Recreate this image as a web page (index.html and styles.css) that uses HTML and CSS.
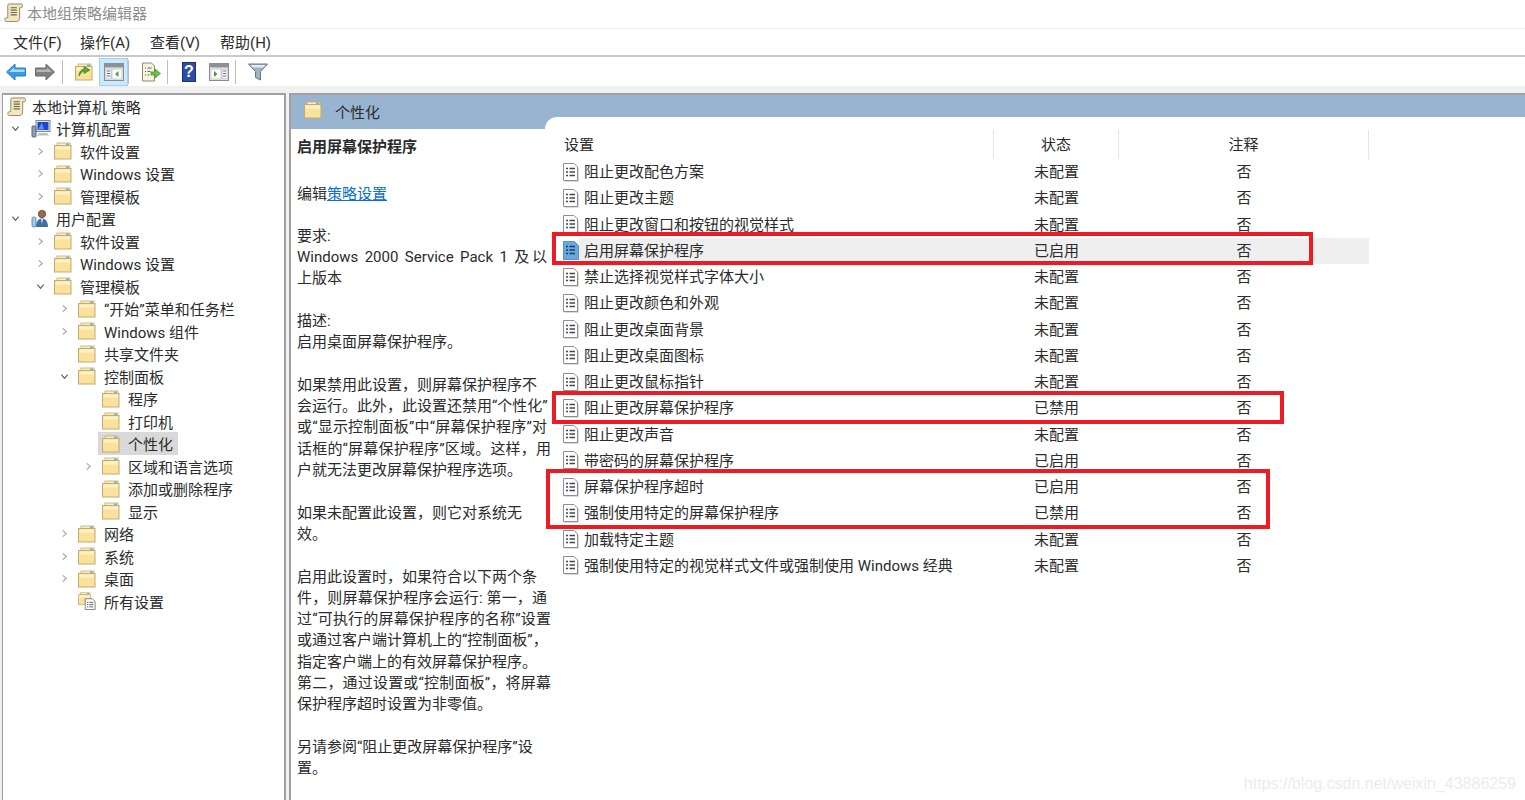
FILE: index.html
```html
<!DOCTYPE html>
<html lang="zh-CN">
<head>
    <meta charset="UTF-8">
    <title>本地组策略编辑器</title>
    <link rel="stylesheet" href="styles.css">
</head>
<body>
    <!-- shared icons -->
    <svg class="defs" width="0" height="0">
        <symbol id="scroll" viewBox="0 0 20 20">
            <path d="M5 1h13.500c1.200 0 1.200 3.500 0 4H16.500v10c0 2.500-1 4.500-3 4.500H2.500c-2 0-2.500-4 0-4H4V3c0-1 .5-2 1-2z" fill="#f3e8bd" stroke="#8f8566"/>
            <path d="M7 5h6.500M7 7.500h6.500M7 10h6.500M7 12.500h6.500" stroke="#6b6450" stroke-width="1.200"/>
        </symbol>
        <symbol id="folder" viewBox="0 0 18 18">
            <path d="M1.500 3.500h1.500v-1.500h12.500v14h-14z" fill="#c9b27a"/>
            <rect x="3" y="1" width="13" height="3" fill="#fbeebc" stroke="#c4ab70" stroke-width=".8"/>
            <rect x="12" y="1.500" width="3" height="1.500" fill="#6fb3dc"/>
            <rect x=".5" y="3.500" width="16.500" height="13.500" fill="#fae29c" stroke="#c4ab70"/>
            <rect x="1.500" y="4.500" width="14.500" height="3" fill="#fdf1c8"/>
        </symbol>
        <symbol id="folder-doc" viewBox="0 0 20 20">
            <use href="#folder" width="15" height="15"/>
            <path d="M8 7.500h8l3 3v9H8z" fill="#fff" stroke="#777"/>
            <path d="M10 11.500h1.500M12.500 11.500h4.500M10 14h1.500M12.500 14h4.500M10 16.500h1.500M12.500 16.500h4.500" stroke="#555"/>
        </symbol>
        <symbol id="computer" viewBox="0 0 20 20">
            <rect x="5" y="1.500" width="14" height="11" fill="#e3e8ee" stroke="#7d8791"/>
            <rect x="6.500" y="3" width="11" height="8" fill="#1c47c8"/>
            <path d="M7 10.500l4-7 2 7z" fill="#5d8ef0"/>
            <path d="M8 14h8l2 2.500H6z" fill="#b6bec7"/>
            <rect x="1" y="7" width="4" height="11" rx="1" fill="#8fa3b8" stroke="#566778"/>
        </symbol>
        <symbol id="user" viewBox="0 0 20 20">
            <circle cx="11" cy="5" r="3.700" fill="#9a6b4a" stroke="#5c4030" stroke-width=".7"/>
            <path d="M5 18c0-6 3-8.500 6-8.500s6 2.500 6 8.500z" fill="#3d6fa5"/>
            <path d="M10 10h2l-1 5z" fill="#e8eef5"/>
            <rect x="1" y="8" width="4" height="10" rx="1.500" fill="#a9c8e6" stroke="#4d7aa5" stroke-width=".8"/>
        </symbol>
        <symbol id="doc" viewBox="0 0 16 19">
            <path d="M1.500 1.500h10l4 4v13h-14z" fill="#b5b5b5"/>
            <path d="M.5.500h10.500l3.500 3.500v13.500H.5z" fill="#fff" stroke="#8e8e8e"/>
            <path d="M3 5.500h2M6.500 5.500h5.500M3 9h2M6.500 9h5.500M3 12.500h2M6.500 12.500h5.500" stroke="#3f4a56" stroke-width="1.500"/>
        </symbol>
        <symbol id="doc-on" viewBox="0 0 16 19">
            <path d="M.5.500h11l4 4v14H.5z" fill="#68a8dc" stroke="#5b93c4"/>
            <path d="M3 5.500h2M6.500 5.500h5.500M3 9h2M6.500 9h5.500M3 12.500h2M6.500 12.500h5.500" stroke="#173f70" stroke-width="1.500"/>
        </symbol>
        <symbol id="pane-win" viewBox="0 0 20 18">
            <rect x=".5" y=".5" width="19" height="17" fill="#f1f1f1" stroke="#8d8d8d"/>
            <rect x="1" y="1" width="18" height="3.500" fill="#8d9094"/>
            <rect x="2" y="6" width="5" height="10" fill="#fff" stroke="#a9a9a9" stroke-width=".6"/>
            <path d="M3 8h3M3 10.500h3M3 13h3" stroke="#4d78a8"/>
            <rect x="8" y="6" width="10" height="10" fill="#fff" stroke="#a9a9a9" stroke-width=".6"/>
        </symbol>
        <symbol id="chev-r" viewBox="0 0 8 10"><path d="M2 1.500L6 5 2 8.500" fill="none" stroke="#a6a6a6" stroke-width="1.300"/></symbol>
        <symbol id="chev-d" viewBox="0 0 10 8"><path d="M1.500 2L5 6 8.500 2" fill="none" stroke="#5c5c5c" stroke-width="1.300"/></symbol>
    </svg>

    <div class="titlebar">
        <svg class="ico-title"><use href="#scroll"/></svg>
        <span>本地组策略编辑器</span>
    </div>

    <div class="menubar">
        <span>文件(F)</span>
        <span>操作(A)</span>
        <span>查看(V)</span>
        <span>帮助(H)</span>
    </div>

    <div class="toolbar">
        <button class="tool tool-nav">
            <svg viewBox="0 0 20 18" width="20" height="18"><path d="M.5 9l8.500-8V5h10.500v8H9v4z" fill="#3a9ae8" stroke="#2a7cc4"/><path d="M3 9l5-4.500v2h10.500V9z" fill="#a9dcfb"/></svg>
        </button>
        <button class="tool tool-nav">
            <svg viewBox="0 0 20 18" width="20" height="18"><path d="M19.500 9L11 1V5H.5v8H11v4z" fill="#808080" stroke="#6a6a6a"/><path d="M17 9l-5-4.500v2H1.500V9z" fill="#b5b5b5"/></svg>
        </button>
        <i class="sep"></i>
        <button class="tool tool-up">
            <svg viewBox="0 0 18 18" width="18" height="18"><use href="#folder"/><path d="M4 13c0-4 2-6.500 5-7V3.500l6 3.500-6 3.500V8c-2 .5-3.500 2.500-5 5z" fill="#5fa82e" stroke="#3e7c17" stroke-width=".7"/></svg>
        </button>
        <button class="tool tool-on">
            <svg viewBox="0 0 20 18" width="20" height="18"><use href="#pane-win"/><path d="M14.500 8v6L11 11z" fill="#3aa23a"/></svg>
        </button>
        <i class="sep"></i>
        <button class="tool tool-export">
            <svg viewBox="0 0 20 20" width="20" height="20"><path d="M1.500 1h9l3 3v15h-12z" fill="#f8f3da" stroke="#8d8a74"/><path d="M4 6h1M6.500 6h4M4 9.500h1M6.500 9.500h3M4 13h1M6.500 13h2" stroke="#666"/><path d="M10 10h4V7l5.500 4.500L14 16v-3h-4z" fill="#69c24a" stroke="#3f8f28" stroke-width=".7"/></svg>
        </button>
        <i class="sep"></i>
        <button class="tool tool-help"><span class="help-mark">?</span></button>
        <button class="tool tool-pane">
            <svg viewBox="0 0 20 18" width="20" height="18"><rect x=".5" y=".5" width="19" height="17" fill="#f1f1f1" stroke="#8d8d8d"/><rect x="1" y="1" width="18" height="3.500" fill="#8d9094"/><rect x="2" y="6" width="10" height="10" fill="#fff" stroke="#a9a9a9" stroke-width=".6"/><rect x="13" y="6" width="5" height="10" fill="#fff" stroke="#a9a9a9" stroke-width=".6"/><path d="M14 8h3M14 10.500h3M14 13h3" stroke="#4d78a8"/><path d="M5 8v6l3.500-3z" fill="#3aa23a"/></svg>
        </button>
        <i class="sep"></i>
        <button class="tool tool-filter">
            <svg viewBox="0 0 20 18" width="20" height="18"><path d="M.5 1h19l-7 7.500V17l-5-2.500V8.500z" fill="#9fb3c1" stroke="#62798a"/><path d="M2.500 2h15L15 4.500H5z" fill="#e4edf3"/></svg>
        </button>
    </div>

    <div class="panes">
        <div class="tree">
            <div class="node"><svg class="ico-scroll"><use href="#scroll"/></svg><span>本地计算机 策略</span></div>
            <div class="node lv1"><svg class="chev"><use href="#chev-d"/></svg><svg class="ico-node"><use href="#computer"/></svg><span>计算机配置</span></div>
            <div class="node lv2"><svg class="chev"><use href="#chev-r"/></svg><svg class="ico"><use href="#folder"/></svg><span>软件设置</span></div>
            <div class="node lv2"><svg class="chev"><use href="#chev-r"/></svg><svg class="ico"><use href="#folder"/></svg><span>Windows 设置</span></div>
            <div class="node lv2"><svg class="chev"><use href="#chev-r"/></svg><svg class="ico"><use href="#folder"/></svg><span>管理模板</span></div>
            <div class="node lv1"><svg class="chev"><use href="#chev-d"/></svg><svg class="ico-node"><use href="#user"/></svg><span>用户配置</span></div>
            <div class="node lv2"><svg class="chev"><use href="#chev-r"/></svg><svg class="ico"><use href="#folder"/></svg><span>软件设置</span></div>
            <div class="node lv2"><svg class="chev"><use href="#chev-r"/></svg><svg class="ico"><use href="#folder"/></svg><span>Windows 设置</span></div>
            <div class="node lv2"><svg class="chev"><use href="#chev-d"/></svg><svg class="ico"><use href="#folder"/></svg><span>管理模板</span></div>
            <div class="node lv3"><svg class="chev"><use href="#chev-r"/></svg><svg class="ico"><use href="#folder"/></svg><span>“开始”菜单和任务栏</span></div>
            <div class="node lv3"><svg class="chev"><use href="#chev-r"/></svg><svg class="ico"><use href="#folder"/></svg><span>Windows 组件</span></div>
            <div class="node lv3"><i class="chev"></i><svg class="ico"><use href="#folder"/></svg><span>共享文件夹</span></div>
            <div class="node lv3"><svg class="chev"><use href="#chev-d"/></svg><svg class="ico"><use href="#folder"/></svg><span>控制面板</span></div>
            <div class="node lv4"><i class="chev"></i><svg class="ico"><use href="#folder"/></svg><span>程序</span></div>
            <div class="node lv4"><i class="chev"></i><svg class="ico"><use href="#folder"/></svg><span>打印机</span></div>
            <div class="node lv4 selected"><i class="chev"></i><div class="sel-box"><svg class="ico"><use href="#folder"/></svg><span>个性化</span></div></div>
            <div class="node lv4"><svg class="chev"><use href="#chev-r"/></svg><svg class="ico"><use href="#folder"/></svg><span>区域和语言选项</span></div>
            <div class="node lv4"><i class="chev"></i><svg class="ico"><use href="#folder"/></svg><span>添加或删除程序</span></div>
            <div class="node lv4"><i class="chev"></i><svg class="ico"><use href="#folder"/></svg><span>显示</span></div>
            <div class="node lv3"><svg class="chev"><use href="#chev-r"/></svg><svg class="ico"><use href="#folder"/></svg><span>网络</span></div>
            <div class="node lv3"><svg class="chev"><use href="#chev-r"/></svg><svg class="ico"><use href="#folder"/></svg><span>系统</span></div>
            <div class="node lv3"><svg class="chev"><use href="#chev-r"/></svg><svg class="ico"><use href="#folder"/></svg><span>桌面</span></div>
            <div class="node lv3"><i class="chev"></i><svg class="ico"><use href="#folder-doc"/></svg><span>所有设置</span></div>
        </div>

        <div class="detail">
            <div class="detail-head">
                <svg class="ico"><use href="#folder"/></svg>
                <span>个性化</span>
            </div>
            <div class="detail-body">
                <div class="desc">
                    <h3>启用屏幕保护程序</h3>
                    <p class="edit">编辑<a href="#">策略设置</a></p>
                    <p>要求:<br><span class="fill-s">Windows 2000 Service Pack 1 及以</span>上版本</p>
                    <p>描述:<br>启用桌面屏幕保护程序。</p>
                    <p>如果禁用此设置，则屏幕保护程序不<br><span class="fill-s">会运行。此外，此设置还禁用“个性化”</span><span class="fill-s">或“显示控制面板”中“屏幕保护程序”对</span><span class="fill">话框的“屏幕保护程序”区域。这样，用</span>户就无法更改屏幕保护程序选项。</p>
                    <p>如果未配置此设置，则它对系统无<br>效。</p>
                    <p>启用此设置时，如果符合以下两个条<br><span class="fill-s">件，则屏幕保护程序会运行: 第一，通</span><span class="fill">过“可执行的屏幕保护程序的名称”设置</span>或通过客户端计算机上的“控制面板”，<br>指定客户端上的有效屏幕保护程序。<br><span class="fill">第二，通过设置或“控制面板”，将屏幕</span>保护程序超时设置为非零值。</p>
                    <p>另请参阅“阻止更改屏幕保护程序”设<br>置。</p>
                </div>
                <div class="list">
                    <div class="list-head">
                        <div class="col-name">设置</div>
                        <div class="col-state">状态</div>
                        <div class="col-note">注释</div>
                    </div>
                    <div class="row"><svg class="ico-doc"><use href="#doc"/></svg><div class="cell-name">阻止更改配色方案</div><div class="cell-state">未配置</div><div class="cell-note">否</div></div>
                    <div class="row"><svg class="ico-doc"><use href="#doc"/></svg><div class="cell-name">阻止更改主题</div><div class="cell-state">未配置</div><div class="cell-note">否</div></div>
                    <div class="row"><svg class="ico-doc"><use href="#doc"/></svg><div class="cell-name">阻止更改窗口和按钮的视觉样式</div><div class="cell-state">未配置</div><div class="cell-note">否</div></div>
                    <div class="row row-on"><svg class="ico-doc"><use href="#doc-on"/></svg><div class="cell-name">启用屏幕保护程序</div><div class="cell-state">已启用</div><div class="cell-note">否</div></div>
                    <div class="row"><svg class="ico-doc"><use href="#doc"/></svg><div class="cell-name">禁止选择视觉样式字体大小</div><div class="cell-state">未配置</div><div class="cell-note">否</div></div>
                    <div class="row"><svg class="ico-doc"><use href="#doc"/></svg><div class="cell-name">阻止更改颜色和外观</div><div class="cell-state">未配置</div><div class="cell-note">否</div></div>
                    <div class="row"><svg class="ico-doc"><use href="#doc"/></svg><div class="cell-name">阻止更改桌面背景</div><div class="cell-state">未配置</div><div class="cell-note">否</div></div>
                    <div class="row"><svg class="ico-doc"><use href="#doc"/></svg><div class="cell-name">阻止更改桌面图标</div><div class="cell-state">未配置</div><div class="cell-note">否</div></div>
                    <div class="row"><svg class="ico-doc"><use href="#doc"/></svg><div class="cell-name">阻止更改鼠标指针</div><div class="cell-state">未配置</div><div class="cell-note">否</div></div>
                    <div class="row"><svg class="ico-doc"><use href="#doc"/></svg><div class="cell-name">阻止更改屏幕保护程序</div><div class="cell-state">已禁用</div><div class="cell-note">否</div></div>
                    <div class="row"><svg class="ico-doc"><use href="#doc"/></svg><div class="cell-name">阻止更改声音</div><div class="cell-state">未配置</div><div class="cell-note">否</div></div>
                    <div class="row"><svg class="ico-doc"><use href="#doc"/></svg><div class="cell-name">带密码的屏幕保护程序</div><div class="cell-state">已启用</div><div class="cell-note">否</div></div>
                    <div class="row"><svg class="ico-doc"><use href="#doc"/></svg><div class="cell-name">屏幕保护程序超时</div><div class="cell-state">已启用</div><div class="cell-note">否</div></div>
                    <div class="row"><svg class="ico-doc"><use href="#doc"/></svg><div class="cell-name">强制使用特定的屏幕保护程序</div><div class="cell-state">已禁用</div><div class="cell-note">否</div></div>
                    <div class="row"><svg class="ico-doc"><use href="#doc"/></svg><div class="cell-name">加载特定主题</div><div class="cell-state">未配置</div><div class="cell-note">否</div></div>
                    <div class="row"><svg class="ico-doc"><use href="#doc"/></svg><div class="cell-name">强制使用特定的视觉样式文件或强制使用 Windows 经典</div><div class="cell-state">未配置</div><div class="cell-note">否</div></div>
                </div>
            </div>
        </div>
    </div>

    <!-- red annotation boxes drawn over the screenshot -->
    <div class="mark mark-1"></div>
    <div class="mark mark-2"></div>
    <div class="mark mark-3"></div>
    <div class="watermark">https://blog.csdn.net/weixin_43886259</div>
</body>
</html>
```

FILE: styles.css
```css
* {
    box-sizing: border-box;
}
html, body {
    height: 100%;
}
body {
    margin: 0;
    background: #f0f0f0;
    color: #2b2b2b;
    font-family: Roboto, "Noto Sans CJK SC", sans-serif;
    font-size: 15px;
    overflow: hidden;
    display: flex;
    flex-direction: column;
    position: relative;
}
.defs {
    position: absolute;
}
svg {
    display: block;
    flex: none;
}

/* title + menu */
.titlebar {
    height: 28px;
    background: #fff;
    display: flex;
    align-items: center;
    padding: 0 0 3px 4px;
    gap: 4px;
    color: #8c8c8c;
}
.ico-title {
    width: 19px;
    height: 19px;
}
.menubar {
    height: 29px;
    background: #fff;
    border-top: 1px solid #f0f0f0;
    border-bottom: 2px solid #c9c9c9;
    display: flex;
    align-items: center;
    padding: 0 0 2px 13px;
}
.menubar span {
    width: 70px;
}
.menubar span:first-child {
    width: 67px;
}

/* toolbar */
.toolbar {
    height: 29px;
    background: #fff;
    display: flex;
    align-items: center;
    padding: 1px 0 0 6px;
}
.tool {
    border: 1px solid transparent;
    background: none;
    padding: 0;
    height: 28px;
    display: flex;
    align-items: center;
    justify-content: center;
}
.tool-nav { width: 20px; margin-right: 9px; }
.tool-nav + .sep { margin-left: -2px; }
.tool-up { width: 18px; margin: 0 6px 0 12px; }
.tool-on {
    width: 29px;
    background: #cce8ff;
    border-color: #99d1ff;
}
.tool-export { width: 20px; margin: 0 6px 0 12px; }
.tool-help { width: 16px; margin: 0 12px 0 13px; }
.tool-pane { width: 20px; margin-right: 6px; }
.tool-filter { width: 20px; margin-left: 12px; }
.sep {
    width: 1px;
    height: 24px;
    background: #bdbdbd;
}
.help-mark {
    width: 16px;
    height: 20px;
    background: #2b4fa8;
    border: 1px solid #1a2f75;
    color: #fff;
    font-size: 16px;
    font-weight: 700;
    line-height: 18px;
    text-align: center;
}

/* two panes */
.panes {
    flex: 1;
    min-height: 0;
    display: flex;
    padding: 7px 0 0 2px;
    gap: 3px;
}
.tree {
    width: 284px;
    background: #fff;
    border: 1px solid #a0a0a0;
    border-width: 2px 2px 0 1px;
}
.node {
    height: 22.500px;
    display: flex;
    align-items: center;
    white-space: nowrap;
    padding-left: 4px;
}
.ico-scroll {
    width: 19px;
    height: 19px;
    margin-right: 6px;
}
.chev {
    width: 9px;
    height: 9px;
    margin-right: 10px;
    display: block;
}
.ico {
    width: 18px;
    height: 18px;
    margin-right: 8px;
}
.ico-node {
    width: 20px;
    height: 20px;
    margin-right: 5px;
}
.lv1 { padding-left: 8px; }
.lv1 .chev { margin-right: 11px; }
.lv2 { padding-left: 33px; }
.lv2 .chev { margin-right: 9px; }
.lv3 { padding-left: 57px; }
.lv3 .chev { margin-right: 9px; }
.lv4 { padding-left: 81px; }
.lv4 .chev { margin-right: 9px; }
.sel-box {
    display: flex;
    align-items: center;
    height: 23px;
    background: #d9d9d9;
    margin-left: -4px;
    padding-left: 4px;
    padding-right: 5px;
}

.detail {
    flex: 1;
    min-width: 0;
    display: flex;
    flex-direction: column;
    background: #fff;
    border-top: 2px solid #a0a0a0;
    border-left: 2px solid #a0a0a0;
}
.detail-head {
    height: 34px;
    background: #99b4d1;
    display: flex;
    align-items: flex-start;
    padding: 6px 0 0 13px;
    gap: 5px;
    line-height: 24px;
}
.detail-body {
    flex: 1;
    min-height: 0;
    display: flex;
}
.desc {
    width: 262px;
    flex: none;
    padding: 0 0 0 6px;
    line-height: 21.300px;
}
.desc h3 {
    margin: 7px 0 26px;
    font-size: 15px;
    font-weight: 700;
    line-height: 22px;
}
.desc p {
    margin: 0 0 21.300px;
}
.desc .edit {
    margin-bottom: 20.500px;
}
.desc a {
    color: #0a6fd6;
}
.fill,
.fill-s {
    display: block;
    width: 254px;
    text-align: justify;
    text-align-last: justify;
    white-space: nowrap;
}
.fill-s {
    width: 250px;
}

/* settings list */
.list {
    flex: 1;
    margin-top: -12px;
    padding-top: 13px;
    position: relative;
}
.list::before {
    content: '';
    position: absolute;
    top: 0;
    left: -8px;
    right: 0;
    height: 12px;
    background: #fff;
    border-top-left-radius: 12px;
}
.list-head {
    display: flex;
    height: 29px;
    align-items: center;
    width: 816px;
    position: relative;
}
.col-name {
    width: 441px;
    padding-left: 11px;
    height: 100%;
    line-height: 30px;
    border-right: 1px solid #e5e5e5;
}
.col-state {
    width: 125px;
    text-align: center;
    height: 100%;
    line-height: 30px;
    border-right: 1px solid #e5e5e5;
}
.col-note {
    width: 250px;
    text-align: center;
    height: 100%;
    line-height: 30px;
    border-right: 1px solid #e5e5e5;
}
.row {
    display: flex;
    align-items: center;
    height: 26.250px;
    width: 816px;
    padding-left: 10px;
}
.ico-doc {
    width: 16px;
    height: 19px;
}
.cell-name,
.cell-state,
.cell-note {
    height: 100%;
    line-height: 27px;
}
.cell-name {
    width: 431px;
    padding-left: 5px;
    margin-right: -16px;
    white-space: nowrap;
}
.cell-state {
    width: 125px;
    padding-left: 40px;
}
.cell-note {
    width: 250px;
    text-align: center;
}
.row-on .cell-name,
.row-on .cell-state,
.row-on .cell-note {
    background: #efefef;
}

/* annotations */
.mark {
    position: absolute;
    border: 4px solid #ed1c24;
    pointer-events: none;
}
.mark-1 { left: 552px; top: 232px; width: 761px; height: 33px; }
.mark-2 { left: 552px; top: 391px; width: 732px; height: 33px; }
.mark-3 { left: 546px; top: 469px; width: 724px; height: 60px; }
.watermark {
    position: absolute;
    right: 9px;
    bottom: 7px;
    color: #ececec;
    font-family: "Liberation Sans", sans-serif;
    font-size: 16px;
    line-height: 18px;
}
```
